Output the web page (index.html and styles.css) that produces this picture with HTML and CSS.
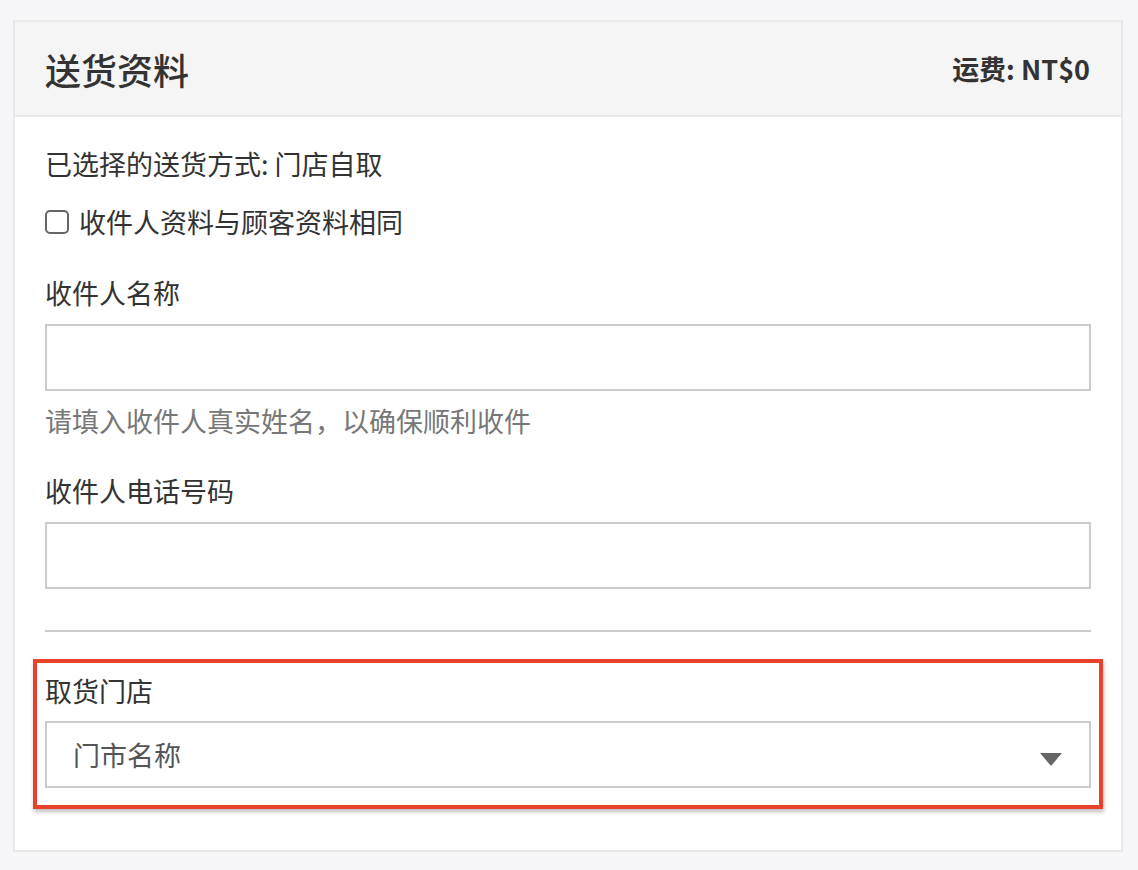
FILE: index.html
```html
<!DOCTYPE html>
<html lang="zh">
<head>
    <meta charset="UTF-8">
    <meta name="viewport" content="width=device-width, initial-scale=1.0">
    <title>送货资料</title>
    <link rel="stylesheet" href="styles.css">
</head>
<body>
    <div class="panel">
        <div class="panel-heading">
            <h2 class="panel-title">送货资料</h2>
            <span class="delivery-fee">运费: NT$0</span>
        </div>
        <form class="panel-body" onsubmit="event.preventDefault();">
            <p class="method">已选择的送货方式: 门店自取</p>
            <label class="check-row">
                <input type="checkbox" id="same">
                <span>收件人资料与顾客资料相同</span>
            </label>

            <div class="field">
                <label for="name">收件人名称</label>
                <input type="text" id="name" name="name">
                <p class="help">请填入收件人真实姓名，以确保顺利收件</p>
            </div>

            <div class="field">
                <label for="phone">收件人电话号码</label>
                <input type="text" id="phone" name="phone">
            </div>

            <hr>

            <div class="highlight">
                <label for="store">取货门店</label>
                <div class="select-wrap">
                    <select id="store" name="store">
                        <option value="">门市名称</option>
                    </select>
                    <span class="caret"></span>
                </div>
            </div>
        </form>
    </div>
</body>
</html>
```

FILE: styles.css
```css
body {
    font-family: 'Noto Sans CJK SC', 'Noto Sans', sans-serif;
    background-color: #f7f7f9;
    margin: 0;
    padding: 20px 0 0 13px;
    color: #333;
}
.panel {
    width: 1110px;
    box-sizing: border-box;
    background-color: #fff;
    border: 2px solid #e9e9e9;
}
.panel-heading {
    height: 93px;
    padding: 0 31px 0 30px;
    display: flex;
    align-items: center;
    justify-content: space-between;
    background-color: #f5f5f5;
    border-bottom: 2px solid #e9e9e9;
}
.panel-title {
    margin: 0;
    font-size: 36px;
    font-weight: 500;
    color: #333;
}
.delivery-fee {
    font-size: 27px;
    font-weight: 700;
    color: #333;
}
.panel-body {
    padding: 27px 30px 41px;
    font-size: 27px;
    line-height: 40px;
}
.method {
    margin: 0;
}
.check-row {
    display: flex;
    align-items: center;
    margin-top: 18px;
}
.check-row input {
    appearance: none;
    width: 24px;
    height: 24px;
    margin: 0 10px 0 0;
    border: 2px solid #666;
    border-radius: 5px;
    background: #fff;
}
.field {
    margin-top: 31px;
}
.field + .field {
    margin-top: 30px;
}
label {
    display: block;
}
.field input[type="text"],
select {
    display: block;
    width: 100%;
    height: 67px;
    margin-top: 11px;
    border: 2px solid #ccc;
    border-radius: 0;
    box-sizing: border-box;
    font-family: inherit;
    font-size: 27px;
    background: #fff;
}
.help {
    margin: 10px 0 0;
    color: #777;
}
hr {
    margin: 41px 0 27px;
    border: none;
    border-top: 2px solid #ccc;
}
.highlight {
    margin: 0 -12px;
    padding: 8px 8px 17px;
    border: 4px solid #e8432a;
    box-shadow: 1px 3px 4px rgba(0, 0, 0, 0.25);
}
.select-wrap {
    position: relative;
}
select {
    appearance: none;
    padding: 0 26px;
    color: #555;
    margin-top: 10px;
}
.caret {
    position: absolute;
    right: 29px;
    top: 32px;
    width: 0;
    height: 0;
    border-left: 11px solid transparent;
    border-right: 11px solid transparent;
    border-top: 13px solid #666;
    pointer-events: none;
}
```
